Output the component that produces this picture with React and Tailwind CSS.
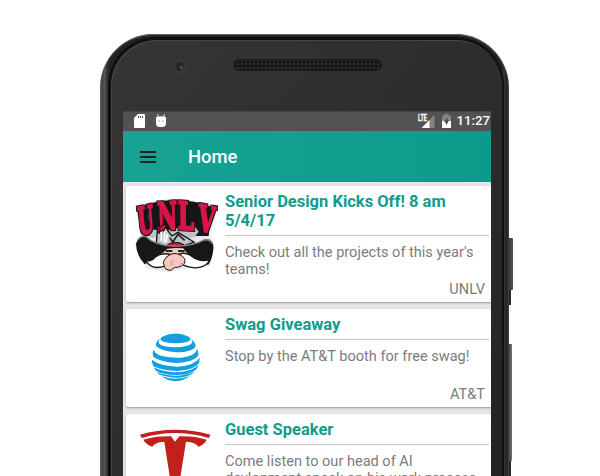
import React from "react";

function UnlvLogo() {
  const letters = [
    { c: "U", t: "matrix(0.52 -0.11 0.09 1.08 57 162)" },
    { c: "N", t: "matrix(0.62 -0.04 0.03 1.1 113 148)" },
    { c: "L", t: "matrix(0.66 0.04 0.01 1.1 174 144)" },
    { c: "V", t: "matrix(0.62 0.12 -0.09 1.04 232 148)" },
  ];
  return (
    <svg className="block h-[77px] w-[82px] overflow-visible" viewBox="45 45 246 231" style={{ fontFamily: '"DejaVu Serif", serif' }}>
      <filter id="outline" x="-10%" y="-10%" width="120%" height="120%">
        <feMorphology in="SourceAlpha" operator="dilate" radius="1.500" result="grown" />
        <feFlood floodColor="#161618" />
        <feComposite in2="grown" operator="in" result="edge" />
        <feMerge>
          <feMergeNode in="edge" />
          <feMergeNode in="SourceGraphic" />
        </feMerge>
      </filter>
      <path d="M48 78Q165 28 290 80L285 112L271 162L284 198L270 254L205 261L145 274L80 262L44 191L62 162Z" fill="#d8dadc" opacity=".6" />
      <path d="M52 82Q165 32 286 82L282 108L270 112L266 165H72L64 110L54 108Z" fill="#161618" />
      <path d="M85 94L95 88V145L128 150L180 140L220 130L236 152L222 170H90Z" fill="#bfc3c7" />
      <g fontSize="104" fontWeight="700" fill="#d6184a" stroke="#d6184a" strokeWidth="5" filter="url(#outline)">
        {letters.map((l) => (
          <text key={l.c} transform={l.t}>{l.c}</text>
        ))}
      </g>
      <path d="M109 185L112 151L118 156L123 139L131 151L136 136L147 154L156 165L174 154L222 183L190 195H132Z" fill="#bfc3c7" stroke="#151515" strokeWidth="4" />
      <path d="M124 151L124 180M134 150L133 184M143 157L138 184" stroke="#fff" strokeWidth="5" />
      <path d="M150 170L158 184L174 160L194 178" fill="none" stroke="#222" strokeWidth="5" />
      <path d="M119 148Q117 133 136 130Q144 145 119 152Z" fill="#c8133e" stroke="#111" strokeWidth="3" />
      <path d="M137 195Q163 175 192 191L184 202H140Z" fill="#d0133d" stroke="#111" strokeWidth="3" />
      <path d="M107 200H215L205 234H115Z" fill="#f4c9be" />
      <path d="M48 188Q55 163 79 165Q100 192 150 196Q208 200 254 175Q282 172 280 203Q277 236 264 252Q240 240 214 226Q196 214 190 202Q165 200 142 203Q132 215 112 224Q92 240 74 250Q49 224 48 188Z" fill="#161718" />
      <path d="M53 177Q65 162 79 168Q105 194 163 195Q216 197 253 177Q270 173 277 188" fill="none" stroke="#84888a" strokeWidth="4" />
      <path d="M138 210H157M174 210H194" stroke="#3b211d" strokeWidth="6" />
      <path d="M76 238Q92 244 105 229Q126 212 155 222L142 252Q98 272 76 238Z" fill="#fff" stroke="#171717" strokeWidth="4" />
      <path d="M171 222Q194 210 215 226Q241 246 270 235Q257 264 219 260Q192 258 174 241Z" fill="#fff" stroke="#171717" strokeWidth="4" />
      <path d="M138 229Q160 211 178 221Q201 230 193 248Q183 260 164 259L153 268Q132 268 132 251Q126 245 138 229Z" fill="#f6c7be" stroke="#171717" strokeWidth="3" />
      <path d="M155 253Q151 241 161 239M181 250L190 245" fill="none" stroke="#bd887e" strokeWidth="3" />
    </svg>
  );
}

function AttLogo() {
  return (
    <svg className="block h-[49px] w-[50px]" viewBox="168 100 147 147" fill="#149fe0">
      <path d="M200 111Q240 92 280 111Q292 120 276 126Q240 135 204 126Q188 120 200 111Z" />
      <path d="M193 117Q180 126 181 139Q198 155 242 158Q294 157 301 138Q299 127 287 117Q298 132 275 138Q240 147 202 138Q182 132 193 117Z" />
      <path d="M175 149Q169 160 173 171Q195 187 242 190Q295 188 309 166L306 147Q300 169 258 174Q195 176 178 158Z" />
      <path d="M169 174Q168 188 173 199Q199 213 245 214Q300 209 311 189L313 174Q295 198 246 201Q194 199 170 181Z" />
      <path d="M175 203L181 213Q207 227 245 226Q291 224 304 207L309 196Q288 217 241 218Q199 216 175 203Z" />
      <path d="M184 217L190 224Q218 235 249 234Q285 230 297 216Q273 227 237 228Q205 227 184 217Z" />
      <path d="M198 230Q238 260 284 229Q239 245 198 230Z" />
    </svg>
  );
}

function TeslaLogo() {
  return (
    <svg className="block h-[72px] w-[72px]" viewBox="134 385 214 216" fill="#c1201d">
      <path d="M135 402Q241 372 348 402L342 412Q241 382 142 412Z" />
      <path d="M146 417Q183 406 229 407L241 423L254 407Q300 406 336 417Q330 431 311 438Q303 425 274 423L246 598H236L209 423Q180 425 173 438Q153 431 146 417Z" />
    </svg>
  );
}

function StatusBar() {
  return (
    <div className="flex h-5 items-center bg-[#525252] pl-[11px] text-white shadow-[inset_0_1px_#444]">
      <svg className="h-[14px] w-[11px]" viewBox="0 0 11 14">
        <path d="M4 0H10Q11 0 11 1V13Q11 14 10 14H1Q0 14 0 13V4Z" fill="#fff" />
        <path d="M4.5 2V4M6.5 2V4M8.5 2V4" stroke="#555" />
      </svg>
      <svg className="ml-[10px] h-[14px] w-[12px]" viewBox="0 0 11 14">
        <path d="M2 0L3 3M9 0L8 3" stroke="#fff" strokeWidth=".8" />
        <path d="M.5 3Q5.500 1.500 10.500 3V10Q10 13 7 13H4Q1 13 .5 10Z" fill="#fff" />
        <path d="M3 7H4M7 7H8" stroke="#555" />
      </svg>
      <svg className="ml-auto h-[15px] w-[17px] overflow-visible" viewBox="0 0 17 15">
        <path d="M16.500 1V14H3.500Z" fill="#858585" />
        <path d="M11.500 6V14H3.500Z" fill="#fff" />
        <text x="0" y="7" fontFamily="Roboto, sans-serif" fontSize="8.500" fontWeight="700" fill="#fff" stroke="#fff" strokeWidth=".3" textLength="9" lengthAdjust="spacingAndGlyphs">LTE</text>
      </svg>
      <svg className="ml-[7px] h-[14px] w-[9px]" viewBox="0 0 9 14">
        <path d="M2.500 0H6.500V1.500H9V14H0V1.500H2.500Z" fill="#858585" />
        <path d="M0 7H9V14H0Z" fill="#fff" />
        <path d="M5.500 3.500L2 8.500H4V11.500L7 6.500H5.500Z" fill="#444" />
      </svg>
      <span className="mr-[1px] ml-[6px] text-[13.200px] leading-5 font-medium whitespace-nowrap">11:27</span>
    </div>
  );
}

function Card({ logo, title, lines, sender, height, gap }) {
  return (
    <article className={`flex shrink-0 rounded-l-[2px] bg-white shadow-[0_1px_2px_#999] ${height}`}>
      <div className="w-[99px] shrink-0">{logo}</div>
      <div className="flex min-w-0 flex-1 flex-col pt-[6px]">
        <h2 className="text-[16.500px] leading-[19px] font-bold whitespace-pre text-[#109b8c]">{title}</h2>
        <div className="mt-[5px] mr-[2px] h-px shrink-0 bg-[#c5c5c5]" />
        <p className="mt-[8px] text-[14.560px] leading-[17px] whitespace-pre text-[#7c7c7c]">{lines}</p>
        <p className={`mr-[6px] text-right text-[14.560px] leading-[17px] text-[#7c7c7c] ${gap}`}>{sender}</p>
      </div>
    </article>
  );
}

export default function App() {
  return (
    <div className="relative h-[476px] w-[600px] overflow-hidden bg-white pt-[34px] pl-[100px] font-[Roboto,sans-serif]">
      <div className="absolute top-[238px] left-[508px] h-[52px] w-[5px] rounded-r-[1px] bg-gradient-to-r from-[#353334] to-[#555253]" />
      <div className="absolute top-[290px] left-[508px] h-[15px] w-[3px] bg-[#262626]" />
      <div className="absolute top-[344px] left-[508px] h-[117px] w-[4px] rounded-r-[1px] bg-gradient-to-r from-[#353334] to-[#777]" />
      <div className="absolute top-[461px] left-[508px] h-[15px] w-[3px] bg-[#262626]" />
      <div className="relative h-[500px] w-[409px] rounded-t-[54px] bg-[linear-gradient(90deg,#666_0,#414443_2px,#555857_5px,#333_7px,#222_10px,#222_402px,#343434_404px,#222_407px,#444_409px)] pt-[3px] pr-[5px] pl-[8px] shadow-[inset_0_1px_1px_#666]">
        <div className="h-full rounded-t-[49px] bg-[#101010] pt-[3px] pr-[2px] pl-[3px]">
          <div className="h-full rounded-t-[46px] bg-gradient-to-br from-[#353535] via-[#2d2d2d] to-[#222] pl-[12px] shadow-[inset_1px_1px_#464646]">
            <div className="flex h-[71px] items-start pt-[18px]">
              <div className="mt-[1px] ml-[49px] flex size-[15px] items-center justify-center rounded-full bg-[#383838]">
                <div className="flex size-[9px] items-center justify-center rounded-full bg-[#28262d]">
                  <div className="mt-[2px] ml-[3px] size-[3px] rounded-full bg-[#665158]" />
                </div>
              </div>
              <div className="mt-[1px] ml-[46px] h-[12px] w-[149px] rounded-full border border-[#1b1b1b] bg-[#242424] bg-[radial-gradient(circle,#0c0c0c_1px,transparent_1.500px)] bg-[size:4px_4px]" />
            </div>
            <div className="h-[400px] w-[368px] overflow-hidden bg-[#e5e5e5]">
              <StatusBar />
              <header className="flex h-[51px] items-center bg-gradient-to-r from-[#17a292] to-[#0c9b8b] pl-[17px]">
                <svg className="h-[12px] w-[16px]" viewBox="0 0 16 12">
                  <path d="M0 1H16M0 6H16M0 11H16" stroke="#172522" strokeWidth="1.800" />
                </svg>
                <h1 className="ml-[32px] pt-px text-[18.400px] leading-6 font-medium text-white">Home</h1>
              </header>
              <main className="flex flex-col gap-[7px] pt-[4px] pl-[3px]">
                <Card
                  height="h-[115.500px]"
                  gap="mt-[3px]"
                  title={"Senior Design Kicks Off! 8 am\n5/4/17"}
                  lines={"Check out all the projects of this year's\nteams!"}
                  sender="UNLV"
                  logo={<div className="pt-[10px] pl-[9px]"><UnlvLogo /></div>}
                />
                <Card
                  height="h-[98px]"
                  gap="mt-[21px]"
                  title="Swag Giveaway"
                  lines="Stop by the AT&T booth for free swag!"
                  sender="AT&T"
                  logo={<div className="pt-[24px] pl-[25px]"><AttLogo /></div>}
                />
                <Card
                  height="h-[115px]"
                  gap="mt-[3px]"
                  title="Guest Speaker"
                  lines={"Come listen to our head of AI\ndevlopment speak on his work process"}
                  sender="Tesla"
                  logo={<div className="pt-[15px] pl-[13px]"><TeslaLogo /></div>}
                />
              </main>
            </div>
          </div>
        </div>
      </div>
    </div>
  );
}
